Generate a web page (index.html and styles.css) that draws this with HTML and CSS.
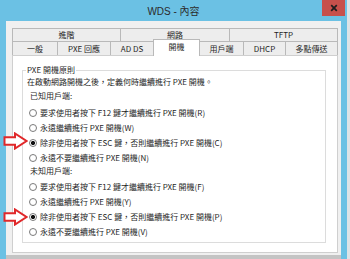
FILE: index.html
```html
<!DOCTYPE html>
<html lang="zh-Hant">
<head>
<meta charset="utf-8">
<title>WDS - 內容</title>
<link rel="stylesheet" href="styles.css">
</head>
<body>
<div class="window">
  <header class="titlebar">
    <h1 class="title">WDS - 內容</h1>
    <button class="close" aria-label="關閉">
      <svg class="close-icon" viewBox="0 0 8 8" width="8" height="8"><path d="M1.2 1.2 L6.8 6.8 M6.8 1.2 L1.2 6.8" /></svg>
    </button>
  </header>
  <main class="frame">
    <nav class="tabs">
      <div class="tab-row row-top">
        <div class="tab">進階</div>
        <div class="tab">網路</div>
        <div class="tab">TFTP</div>
      </div>
      <div class="tab-row row-bottom">
        <div class="tab">一般</div>
        <div class="tab">PXE 回應</div>
        <div class="tab">AD DS</div>
        <div class="tab active">開機</div>
        <div class="tab">用戶端</div>
        <div class="tab">DHCP</div>
        <div class="tab">多點傳送</div>
      </div>
    </nav>
    <section class="panel">
      <fieldset class="group">
        <legend>PXE 開機原則</legend>
        <p class="desc">在啟動網路開機之後，定義何時繼續進行 PXE 開機。</p>
        <p class="sub">已知用戶端:</p>
        <ul class="options">
          <li><label><input type="radio" name="known">要求使用者按下 F12 鍵才繼續進行 PXE 開機(R)</label></li>
          <li><label><input type="radio" name="known">永遠繼續進行 PXE 開機(W)</label></li>
          <li><label><input type="radio" name="known" checked>除非使用者按下 ESC 鍵，否則繼續進行 PXE 開機(C)</label></li>
          <li><label><input type="radio" name="known">永遠不要繼續進行 PXE 開機(N)</label></li>
        </ul>
        <p class="sub sub-unknown">未知用戶端:</p>
        <ul class="options options-unknown">
          <li><label><input type="radio" name="unknown">要求使用者按下 F12 鍵才繼續進行 PXE 開機(F)</label></li>
          <li><label><input type="radio" name="unknown">永遠繼續進行 PXE 開機(Y)</label></li>
          <li><label><input type="radio" name="unknown" checked>除非使用者按下 ESC 鍵，否則繼續進行 PXE 開機(P)</label></li>
          <li><label><input type="radio" name="unknown">永遠不要繼續進行 PXE 開機(V)</label></li>
        </ul>
      </fieldset>
    </section>
    <div class="band"></div>
  </main>
</div>
<svg class="arrow arrow-1" viewBox="0 0 25 18" width="25" height="18"><polygon points="1.5,5.3 12,5.3 12,1.5 23.5,9 12,16.5 12,12.7 1.5,12.7" /></svg>
<svg class="arrow arrow-2" viewBox="0 0 25 18" width="25" height="18"><polygon points="1.5,5.3 12,5.3 12,1.5 23.5,9 12,16.5 12,12.7 1.5,12.7" /></svg>
</body>
</html>
```

FILE: styles.css
```css
* { box-sizing: border-box; }

html, body { margin: 0; padding: 0; }

body {
  width: 350px;
  height: 259px;
  overflow: hidden;
  position: relative;
  background: #6bc1e4;
  border-right: 3px solid #dde3e6;
  font-family: "Noto Sans CJK TC", sans-serif;
  font-size: 8px;
  color: #1f1f1f;
}

.window {
  display: flex;
  flex-direction: column;
  height: 259px;
}

.titlebar {
  height: 21px;
  flex: none;
  display: grid;
  grid-template-columns: 1fr auto 1fr;
  align-items: start;
}

.title {
  grid-column: 2;
  margin: 0;
  padding-top: 2px;
  font-family: "Liberation Sans", "Noto Sans CJK TC", sans-serif;
  font-size: 10px;
  line-height: 19px;
  font-weight: normal;
  color: #2b2b2b;
}

.close {
  grid-column: 3;
  justify-self: end;
  width: 23px;
  height: 16px;
  margin-right: 2px;
  padding: 0;
  border: 0;
  background: #c7504b;
  display: flex;
  align-items: center;
  justify-content: center;
}

.close-icon path {
  stroke: #1e1e1e;
  stroke-width: 1.7;
  fill: none;
}

.frame {
  flex: 1;
  width: 335px;
  margin-left: 6px;
  padding: 7px 3px 0 6px;
  background: #f0f0f0;
  display: flex;
  flex-direction: column;
}

.tab-row { display: grid; }

.row-top {
  grid-template-columns: 108px 109px 109px;
  height: 13px;
}

.row-bottom {
  grid-template-columns: 45px 53px 43px 46px 44px 42px 53px;
  height: 14px;
}

.tab {
  border-top: 1px solid #b9b9b9;
  border-left: 1px solid #b9b9b9;
  background: #ededed;
  text-align: center;
  line-height: 12px;
  white-space: nowrap;
}

.tab:last-child { border-right: 1px solid #b9b9b9; }

.row-bottom .tab { line-height: 13px; }

.row-bottom .tab.active {
  position: relative;
  z-index: 1;
  margin: -2px -1px -1px 0;
  background: #fff;
  border-right: 1px solid #b9b9b9;
  line-height: 13px;
}

.panel {
  flex: 1;
  background: #fff;
  border: 1px solid #cfcfcf;
  padding: 8px 11px 0 9px;
}

.group {
  margin: 0;
  padding: 0 3px 3px 3px;
  border: 1px solid #dcdcdc;
  min-width: 0;
}

.group legend {
  padding: 0 1px;
  line-height: 12px;
}

.desc {
  margin: 0 0 0 1px;
  line-height: 12px;
  white-space: nowrap;
}

.sub {
  margin: 2px 0 0 4px;
  line-height: 12px;
}

.sub-unknown { margin-top: 0; }

.options {
  list-style: none;
  margin: 3px 0 0;
  padding: 0;
}

.options-unknown { margin-top: 2px; }

.options li {
  height: 15px;
  display: flex;
  align-items: center;
  padding-left: 3px;
  white-space: nowrap;
}

.options label {
  display: flex;
  align-items: center;
  gap: 3px;
}

.options input[type="radio"] {
  appearance: none;
  -webkit-appearance: none;
  width: 8px;
  height: 8px;
  margin: 0;
  border: 1px solid #7a7a7a;
  border-radius: 50%;
  background: #fff;
  flex: none;
}

.options input[type="radio"]:checked {
  background: radial-gradient(circle, #111 0 1.7px, #fff 2.4px);
}

.band {
  flex: none;
  height: 4px;
  margin: 2px -3px 0 -6px;
  background: #c4c4c4;
}

.arrow {
  position: absolute;
  left: 3px;
}

.arrow polygon {
  fill: #fff;
  stroke: #e0282a;
  stroke-width: 2;
  stroke-linejoin: miter;
}

.arrow-1 { top: 132px; }
.arrow-2 { top: 208px; }
```
